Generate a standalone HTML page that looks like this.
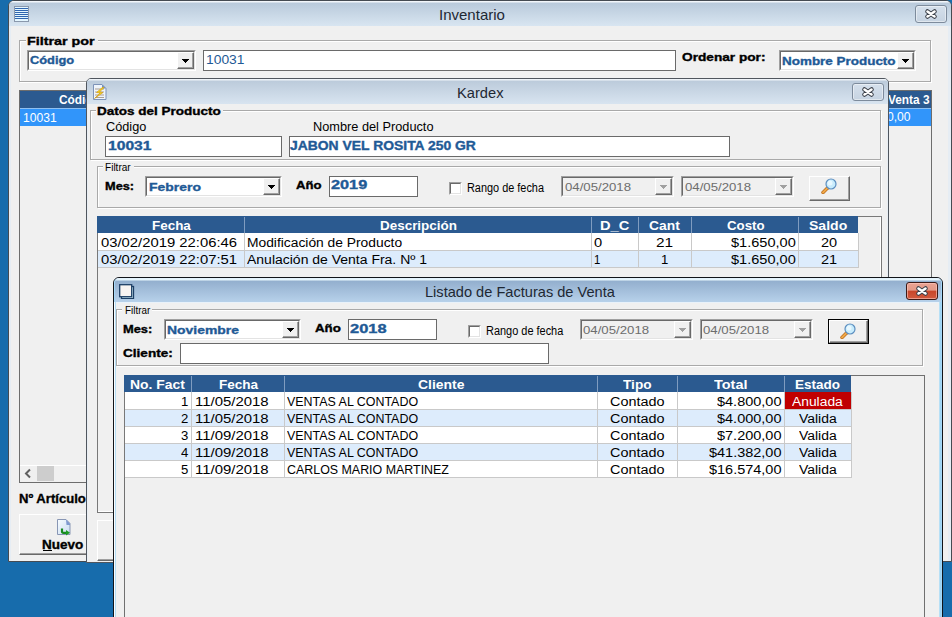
<!DOCTYPE html>
<html><head><meta charset="utf-8"><style>
html,body{margin:0;padding:0;}
body{width:952px;height:617px;overflow:hidden;position:relative;background:#176cac;font-family:"Liberation Sans",sans-serif;}
div{position:absolute;box-sizing:border-box;}
svg{position:absolute;}
.t{white-space:pre;transform-origin:0 0;font-family:"Liberation Sans",sans-serif;}
</style></head><body>
<div style="left:8px;top:0px;width:944px;height:562px;background:#dfe8f1;border:1px solid #454b52;border-radius:6px 6px 0 0;"></div>
<div style="left:9px;top:1px;width:942px;height:25px;background:linear-gradient(#f2f6fa 0px,#f2f6fa 1px,#b9cadb 2px,#d8e5f1 100%);border-radius:5px 5px 0 0;"></div>
<div style="left:9px;top:26px;width:942px;height:535px;background:#e6edf4;"></div>
<div style="left:11px;top:26px;width:937px;height:535px;background:#f0f0f0;"></div>
<div style="left:14px;top:6px;width:15px;height:16px;background:#e4f6ff;border:1px solid #8a98ac;"></div>
<div style="left:15px;top:8px;width:13px;height:1px;background:#2f66b0;"></div>
<div style="left:15px;top:10px;width:13px;height:1px;background:#2f66b0;"></div>
<div style="left:15px;top:12px;width:13px;height:1px;background:#2f66b0;"></div>
<div style="left:15px;top:14px;width:13px;height:1px;background:#2f66b0;"></div>
<div style="left:15px;top:16px;width:13px;height:1px;background:#2f66b0;"></div>
<div style="left:15px;top:18px;width:13px;height:1px;background:#2f66b0;"></div>
<div class="t" style="left:438.50px;top:7px;font-weight:normal;font-size:15px;line-height:15px;color:#1e2833;transform:scaleX(1.0004);">Inventario</div>
<div style="left:915px;top:5px;width:32px;height:18px;border:1px solid #7d8b9c;border-radius:3px;background:linear-gradient(#d5e0ec,#c6d3e1);box-shadow:inset 0 0 0 1px rgba(255,255,255,.45);"></div>
<svg style="position:absolute;left:924.0px;top:8.0px" width="14" height="12" viewBox="0 0 14 12"><path d="M3.5 3.5 L10.5 8.5 M10.5 3.5 L3.5 8.5" stroke="#3a3f48" stroke-width="4.6" stroke-linecap="round"/><path d="M3.5 3.5 L10.5 8.5 M10.5 3.5 L3.5 8.5" stroke="#fff" stroke-width="2.6" stroke-linecap="round"/></svg>
<div style="left:19px;top:40px;width:912px;height:42px;border:1px solid #a9a9a9;box-shadow:inset 1px 1px #fff,1px 1px #fff;"></div>
<div style="left:26px;top:33px;width:72px;height:13px;background:#f0f0f0;"></div>
<div class="t" style="left:27.40px;top:36px;font-weight:bold;font-size:11px;line-height:11px;color:#000;transform:scaleX(1.3004);-webkit-text-stroke:0.35px #000;">Filtrar por</div>
<div style="left:27px;top:50px;width:169px;height:21px;background:#fff;border-top:1px solid #a0a0a0;border-left:1px solid #a0a0a0;border-bottom:1px solid #fff;border-right:1px solid #fff;"></div>
<div style="left:28px;top:51px;width:167px;height:19px;border-top:1px solid #696969;border-left:1px solid #696969;border-bottom:1px solid #e3e3e3;border-right:1px solid #e3e3e3;"></div>
<div style="left:177px;top:52px;width:17px;height:17px;background:#f0f0f0;border-top:1px solid #fff;border-left:1px solid #fff;border-bottom:1px solid #696969;border-right:1px solid #696969;"></div>
<div style="left:178px;top:53px;width:15px;height:15px;border-bottom:1px solid #a0a0a0;border-right:1px solid #a0a0a0;"></div>
<div style="left:182px;top:59px;width:7px;height:1px;background:#000;"></div>
<div style="left:183px;top:60px;width:5px;height:1px;background:#000;"></div>
<div style="left:184px;top:61px;width:3px;height:1px;background:#000;"></div>
<div style="left:185px;top:62px;width:1px;height:1px;background:#000;"></div>
<div class="t" style="left:30.33px;top:55px;font-weight:bold;font-size:11px;line-height:11px;color:#1f5a96;transform:scaleX(1.1665);-webkit-text-stroke:0.35px #1f5a96;">Código</div>
<div style="left:203px;top:50px;width:473px;height:21px;background:#fff;border:1px solid #6a6a6a;"></div>
<div class="t" style="left:205.65px;top:54px;font-weight:normal;font-size:12px;line-height:12px;color:#1f5a96;transform:scaleX(1.1531);">10031</div>
<div class="t" style="left:682.06px;top:52px;font-weight:bold;font-size:11px;line-height:11px;color:#000;transform:scaleX(1.2418);-webkit-text-stroke:0.35px #000;">Ordenar por:</div>
<div style="left:779px;top:50px;width:137px;height:21px;background:#fff;border-top:1px solid #a0a0a0;border-left:1px solid #a0a0a0;border-bottom:1px solid #fff;border-right:1px solid #fff;"></div>
<div style="left:780px;top:51px;width:135px;height:19px;border-top:1px solid #696969;border-left:1px solid #696969;border-bottom:1px solid #e3e3e3;border-right:1px solid #e3e3e3;"></div>
<div style="left:897px;top:52px;width:17px;height:17px;background:#f0f0f0;border-top:1px solid #fff;border-left:1px solid #fff;border-bottom:1px solid #696969;border-right:1px solid #696969;"></div>
<div style="left:898px;top:53px;width:15px;height:15px;border-bottom:1px solid #a0a0a0;border-right:1px solid #a0a0a0;"></div>
<div style="left:902px;top:59px;width:7px;height:1px;background:#000;"></div>
<div style="left:903px;top:60px;width:5px;height:1px;background:#000;"></div>
<div style="left:904px;top:61px;width:3px;height:1px;background:#000;"></div>
<div style="left:905px;top:62px;width:1px;height:1px;background:#000;"></div>
<div class="t" style="left:782.38px;top:56px;font-weight:bold;font-size:11px;line-height:11px;color:#1f5a96;transform:scaleX(1.2224);-webkit-text-stroke:0.35px #1f5a96;">Nombre Producto</div>
<div style="left:19px;top:90px;width:913px;height:393px;background:#f0f0f0;border:1px solid #6d6d6d;"></div>
<div style="left:20px;top:91px;width:911px;height:17px;background:#2b5a90;"></div>
<div style="left:20px;top:108px;width:911px;height:1px;background:#8fc0f0;"></div>
<div style="left:20px;top:109px;width:911px;height:17px;background:#3195fa;"></div>
<div class="t" style="left:59.41px;top:94px;font-weight:bold;font-size:12px;line-height:12px;color:#fff;transform:scaleX(0.9868);-webkit-text-stroke:0.35px #fff;-webkit-text-stroke:0;">Código</div>
<div class="t" style="left:888.01px;top:94px;font-weight:bold;font-size:12px;line-height:12px;color:#fff;transform:scaleX(0.9870);-webkit-text-stroke:0.35px #fff;-webkit-text-stroke:0;">Venta 3</div>
<div class="t" style="left:23.09px;top:112px;font-weight:normal;font-size:12px;line-height:12px;color:#fff;transform:scaleX(1.0101);">10031</div>
<div class="t" style="left:886.99px;top:111px;font-weight:normal;font-size:12px;line-height:12px;color:#fff;transform:scaleX(1.0109);">0,00</div>
<div style="left:20px;top:465px;width:911px;height:17px;background:#f0f0f0;border-top:1px solid #fff;"></div>
<div style="left:37px;top:466px;width:17px;height:15px;background:#cdcdcd;"></div>
<svg style="position:absolute;left:24px;top:468px" width="8" height="11" viewBox="0 0 8 11"><path d="M6 1.5 L2 5.5 L6 9.5" stroke="#606060" stroke-width="2" fill="none"/></svg>
<div class="t" style="left:18.69px;top:492px;font-weight:bold;font-size:13px;line-height:13px;color:#000;transform:scaleX(1.0063);-webkit-text-stroke:0.35px #000;">Nº Artículo</div>
<div style="left:19px;top:514px;width:81px;height:41px;background:#f0f0f0;border-top:1px solid #fff;border-left:1px solid #fff;border-bottom:1px solid #696969;border-right:1px solid #696969;"></div>
<div style="left:20px;top:515px;width:79px;height:39px;border-bottom:1px solid #a0a0a0;border-right:1px solid #a0a0a0;"></div>
<svg style="position:absolute;left:57px;top:519px" width="14" height="17" viewBox="0 0 14 17"><defs><linearGradient id="pg" x1="0" y1="0" x2="1" y2="1"><stop offset="0" stop-color="#f8fcff"/><stop offset="1" stop-color="#c8dcf2"/></linearGradient></defs><path d="M0.5 0.5 H9 L13 4.5 V15.5 H0.5 Z" fill="url(#pg)" stroke="#8896b4"/><path d="M9 0.5 L13 4.5 V6 H9.5 Z" fill="#7e9ad0"/><path d="M5 9.5 V12.5 Q5 13.8 6.5 13.8 H9.5" stroke="#178a1e" stroke-width="2.2" fill="none"/><path d="M9 11 L13 13.8 L9 16.6 Z" fill="#1c9c24"/></svg>
<div class="t" style="left:42.38px;top:539px;font-weight:bold;font-size:12px;line-height:12px;color:#000;transform:scaleX(1.1243);-webkit-text-stroke:0.35px #000;">Nuevo</div>
<div style="left:43px;top:550px;width:9px;height:1px;background:#000;"></div>
<div style="left:86px;top:78px;width:803px;height:485px;background:#dfe8f1;border:1px solid #50565e;border-radius:5px 5px 0 0;"></div>
<div style="left:87px;top:79px;width:801px;height:25px;background:linear-gradient(#eef3f8 0px,#eef3f8 1px,#bccbdb 2px,#d8e4f0 100%);border-radius:4px 4px 0 0;"></div>
<div style="left:87px;top:104px;width:801px;height:458px;background:#e8eef4;"></div>
<div style="left:88px;top:104px;width:799px;height:458px;background:#f0f0f0;"></div>
<svg style="position:absolute;left:93px;top:84px" width="14" height="16" viewBox="0 0 14 16"><path d="M0.5 0.5 H9 L13 4.5 V15.5 H0.5 Z" fill="#eef4fb" stroke="#7d93b8"/><path d="M9 0.5 V4.5 H13 Z" fill="#6d8fc6"/><g stroke="#9c8a78" stroke-width="1" opacity=".8"><line x1="2" y1="5" x2="11" y2="5"/><line x1="2" y1="8" x2="11" y2="8"/><line x1="2" y1="11" x2="11" y2="11"/><line x1="2" y1="13.5" x2="11" y2="13.5"/></g><path d="M10 3 L3.5 8.5 L7 9 L1.5 14.5 L10 8.5 L6.5 8 L11 3.5 Z" fill="#f6dc1c" stroke="#d29a18" stroke-width=".7"/></svg>
<div class="t" style="left:456.62px;top:85px;font-weight:normal;font-size:15px;line-height:15px;color:#1e2833;transform:scaleX(0.9777);">Kardex</div>
<div style="left:852px;top:83px;width:32px;height:18px;border:1px solid #7d8b9c;border-radius:3px;background:linear-gradient(#d5e0ec,#c6d3e1);box-shadow:inset 0 0 0 1px rgba(255,255,255,.45);"></div>
<svg style="position:absolute;left:861.0px;top:86.0px" width="14" height="12" viewBox="0 0 14 12"><path d="M3.5 3.5 L10.5 8.5 M10.5 3.5 L3.5 8.5" stroke="#3a3f48" stroke-width="4.6" stroke-linecap="round"/><path d="M3.5 3.5 L10.5 8.5 M10.5 3.5 L3.5 8.5" stroke="#fff" stroke-width="2.6" stroke-linecap="round"/></svg>
<div style="left:90px;top:110px;width:791px;height:50px;border:1px solid #a9a9a9;box-shadow:inset 1px 1px #fff,1px 1px #fff;"></div>
<div style="left:96px;top:105px;width:127px;height:11px;background:#f0f0f0;"></div>
<div class="t" style="left:97.17px;top:106px;font-weight:bold;font-size:11px;line-height:11px;color:#000;transform:scaleX(1.2274);-webkit-text-stroke:0.35px #000;">Datos del Producto</div>
<div class="t" style="left:105.54px;top:121px;font-weight:normal;font-size:12px;line-height:12px;color:#000;transform:scaleX(1.0589);">Código</div>
<div class="t" style="left:313.14px;top:121px;font-weight:normal;font-size:12px;line-height:12px;color:#000;transform:scaleX(1.0625);">Nombre del Producto</div>
<div style="left:105px;top:136px;width:177px;height:21px;background:#fff;border:1px solid #6a6a6a;"></div>
<div class="t" style="left:107.50px;top:140px;font-weight:bold;font-size:12px;line-height:12px;color:#1f5a96;transform:scaleX(1.3023);-webkit-text-stroke:0.35px #1f5a96;">10031</div>
<div style="left:289px;top:136px;width:441px;height:21px;background:#fff;border:1px solid #6a6a6a;"></div>
<div class="t" style="left:290.34px;top:140px;font-weight:bold;font-size:12px;line-height:12px;color:#1f5a96;transform:scaleX(1.1583);-webkit-text-stroke:0.35px #1f5a96;">JABON VEL ROSITA 250 GR</div>
<div style="left:97px;top:166px;width:784px;height:42px;border:1px solid #a9a9a9;box-shadow:inset 1px 1px #fff,1px 1px #fff;"></div>
<div style="left:103px;top:161px;width:31px;height:11px;background:#f0f0f0;"></div>
<div class="t" style="left:105.49px;top:162px;font-weight:normal;font-size:11px;line-height:11px;color:#000;transform:scaleX(0.9142);">Filtrar</div>
<div class="t" style="left:104.64px;top:181px;font-weight:bold;font-size:11px;line-height:11px;color:#000;transform:scaleX(1.1608);-webkit-text-stroke:0.35px #000;">Mes:</div>
<div style="left:145px;top:176px;width:137px;height:21px;background:#fff;border-top:1px solid #a0a0a0;border-left:1px solid #a0a0a0;border-bottom:1px solid #fff;border-right:1px solid #fff;"></div>
<div style="left:146px;top:177px;width:135px;height:19px;border-top:1px solid #696969;border-left:1px solid #696969;border-bottom:1px solid #e3e3e3;border-right:1px solid #e3e3e3;"></div>
<div style="left:263px;top:178px;width:17px;height:17px;background:#f0f0f0;border-top:1px solid #fff;border-left:1px solid #fff;border-bottom:1px solid #696969;border-right:1px solid #696969;"></div>
<div style="left:264px;top:179px;width:15px;height:15px;border-bottom:1px solid #a0a0a0;border-right:1px solid #a0a0a0;"></div>
<div style="left:268px;top:185px;width:7px;height:1px;background:#000;"></div>
<div style="left:269px;top:186px;width:5px;height:1px;background:#000;"></div>
<div style="left:270px;top:187px;width:3px;height:1px;background:#000;"></div>
<div style="left:271px;top:188px;width:1px;height:1px;background:#000;"></div>
<div class="t" style="left:148.63px;top:182px;font-weight:bold;font-size:11px;line-height:11px;color:#1f5a96;transform:scaleX(1.2673);-webkit-text-stroke:0.35px #1f5a96;">Febrero</div>
<div class="t" style="left:295.91px;top:180px;font-weight:bold;font-size:11px;line-height:11px;color:#000;transform:scaleX(1.1936);-webkit-text-stroke:0.35px #000;">Año</div>
<div style="left:329px;top:176px;width:89px;height:21px;background:#fff;border:1px solid #6a6a6a;"></div>
<div class="t" style="left:330.64px;top:179px;font-weight:bold;font-size:12px;line-height:12px;color:#1f5a96;transform:scaleX(1.3567);-webkit-text-stroke:0.35px #1f5a96;">2019</div>
<div style="left:449px;top:182px;width:13px;height:13px;background:#fff;border-top:1px solid #a0a0a0;border-left:1px solid #a0a0a0;border-bottom:1px solid #fff;border-right:1px solid #fff;"></div>
<div style="left:450px;top:183px;width:11px;height:11px;border-top:1px solid #696969;border-left:1px solid #696969;border-bottom:1px solid #e3e3e3;border-right:1px solid #e3e3e3;"></div>
<div class="t" style="left:466.99px;top:182px;font-weight:normal;font-size:12px;line-height:12px;color:#000;transform:scaleX(0.9086);">Rango de fecha</div>
<div style="left:561px;top:176px;width:113px;height:21px;background:#f0f0f0;border-top:1px solid #a0a0a0;border-left:1px solid #a0a0a0;border-bottom:1px solid #fff;border-right:1px solid #fff;"></div>
<div style="left:562px;top:177px;width:111px;height:19px;border-top:1px solid #696969;border-left:1px solid #696969;border-bottom:1px solid #e3e3e3;border-right:1px solid #e3e3e3;"></div>
<div style="left:655px;top:178px;width:17px;height:17px;background:#f0f0f0;border-top:1px solid #fff;border-left:1px solid #fff;border-bottom:1px solid #696969;border-right:1px solid #696969;"></div>
<div style="left:656px;top:179px;width:15px;height:15px;border-bottom:1px solid #a0a0a0;border-right:1px solid #a0a0a0;"></div>
<div style="left:660px;top:185px;width:7px;height:1px;background:#a0a0a0;"></div>
<div style="left:661px;top:186px;width:5px;height:1px;background:#a0a0a0;"></div>
<div style="left:662px;top:187px;width:3px;height:1px;background:#a0a0a0;"></div>
<div style="left:663px;top:188px;width:1px;height:1px;background:#a0a0a0;"></div>
<div class="t" style="left:564.80px;top:182px;font-weight:normal;font-size:11px;line-height:11px;color:#6d6d6d;transform:scaleX(1.1994);">04/05/2018</div>
<div style="left:681px;top:176px;width:113px;height:21px;background:#f0f0f0;border-top:1px solid #a0a0a0;border-left:1px solid #a0a0a0;border-bottom:1px solid #fff;border-right:1px solid #fff;"></div>
<div style="left:682px;top:177px;width:111px;height:19px;border-top:1px solid #696969;border-left:1px solid #696969;border-bottom:1px solid #e3e3e3;border-right:1px solid #e3e3e3;"></div>
<div style="left:775px;top:178px;width:17px;height:17px;background:#f0f0f0;border-top:1px solid #fff;border-left:1px solid #fff;border-bottom:1px solid #696969;border-right:1px solid #696969;"></div>
<div style="left:776px;top:179px;width:15px;height:15px;border-bottom:1px solid #a0a0a0;border-right:1px solid #a0a0a0;"></div>
<div style="left:780px;top:185px;width:7px;height:1px;background:#a0a0a0;"></div>
<div style="left:781px;top:186px;width:5px;height:1px;background:#a0a0a0;"></div>
<div style="left:782px;top:187px;width:3px;height:1px;background:#a0a0a0;"></div>
<div style="left:783px;top:188px;width:1px;height:1px;background:#a0a0a0;"></div>
<div class="t" style="left:684.60px;top:182px;font-weight:normal;font-size:11px;line-height:11px;color:#6d6d6d;transform:scaleX(1.1994);">04/05/2018</div>
<div style="left:809px;top:176px;width:41px;height:25px;background:#f0f0f0;border-top:1px solid #fff;border-left:1px solid #fff;border-bottom:1px solid #696969;border-right:1px solid #696969;"></div>
<div style="left:810px;top:177px;width:39px;height:23px;border-bottom:1px solid #a0a0a0;border-right:1px solid #a0a0a0;"></div>
<svg style="position:absolute;left:821px;top:178px" width="16" height="16" viewBox="0 0 16 16"><path d="M2 14.5 L6.5 10" stroke="#b86a1a" stroke-width="3.4" stroke-linecap="round"/><path d="M2 14.5 L6.5 10" stroke="#f0a848" stroke-width="2" stroke-linecap="round"/><circle cx="10" cy="6" r="5" fill="#c8ecfc" stroke="#5d8fc0" stroke-width="1.2"/><circle cx="9" cy="5" r="2.5" fill="#e8f8ff"/></svg>
<div style="left:97px;top:216px;width:785px;height:297px;border:1px solid #787878;box-shadow:inset -1px -1px #fff;"></div>
<div style="left:97px;top:216px;width:761px;height:17px;background:#2b5a90;"></div>
<div style="left:244px;top:217px;width:1px;height:16px;background:#7f9cc0;"></div>
<div style="left:591px;top:217px;width:1px;height:16px;background:#7f9cc0;"></div>
<div style="left:638px;top:217px;width:1px;height:16px;background:#7f9cc0;"></div>
<div style="left:691px;top:217px;width:1px;height:16px;background:#7f9cc0;"></div>
<div style="left:798px;top:217px;width:1px;height:16px;background:#7f9cc0;"></div>
<div style="left:97px;top:233px;width:761px;height:18px;background:#fff;"></div>
<div style="left:97px;top:250px;width:761px;height:1px;background:#c9c9c9;"></div>
<div style="left:97px;top:251px;width:761px;height:17px;background:#ddecfc;"></div>
<div style="left:97px;top:267px;width:761px;height:1px;background:#c9c9c9;"></div>
<div style="left:97px;top:233px;width:1px;height:35px;background:#787878;"></div>
<div style="left:244px;top:233px;width:1px;height:35px;background:#c9c9c9;"></div>
<div style="left:591px;top:233px;width:1px;height:35px;background:#c9c9c9;"></div>
<div style="left:638px;top:233px;width:1px;height:35px;background:#c9c9c9;"></div>
<div style="left:691px;top:233px;width:1px;height:35px;background:#c9c9c9;"></div>
<div style="left:798px;top:233px;width:1px;height:35px;background:#c9c9c9;"></div>
<div style="left:858px;top:233px;width:1px;height:35px;background:#c9c9c9;"></div>
<div class="t" style="left:151.58px;top:220px;font-weight:bold;font-size:12px;line-height:12px;color:#fff;transform:scaleX(1.1198);-webkit-text-stroke:0.35px #fff;-webkit-text-stroke:0;">Fecha</div>
<div class="t" style="left:379.78px;top:220px;font-weight:bold;font-size:12px;line-height:12px;color:#fff;transform:scaleX(1.1199);-webkit-text-stroke:0.35px #fff;-webkit-text-stroke:0;">Descripción</div>
<div class="t" style="left:599.98px;top:220px;font-weight:bold;font-size:12px;line-height:12px;color:#fff;transform:scaleX(1.2228);-webkit-text-stroke:0.35px #fff;-webkit-text-stroke:0;">D_C</div>
<div class="t" style="left:649.15px;top:220px;font-weight:bold;font-size:12px;line-height:12px;color:#fff;transform:scaleX(1.1542);-webkit-text-stroke:0.35px #fff;-webkit-text-stroke:0;">Cant</div>
<div class="t" style="left:726.50px;top:220px;font-weight:bold;font-size:12px;line-height:12px;color:#fff;transform:scaleX(1.1037);-webkit-text-stroke:0.35px #fff;-webkit-text-stroke:0;">Costo</div>
<div class="t" style="left:808.83px;top:220px;font-weight:bold;font-size:12px;line-height:12px;color:#fff;transform:scaleX(1.1693);-webkit-text-stroke:0.35px #fff;-webkit-text-stroke:0;">Saldo</div>
<div class="t" style="left:100.57px;top:237px;font-weight:normal;font-size:12px;line-height:12px;color:#000;transform:scaleX(1.2350);">03/02/2019 22:06:46</div>
<div class="t" style="left:246.95px;top:237px;font-weight:normal;font-size:12px;line-height:12px;color:#000;transform:scaleX(1.1509);">Modificación de Producto</div>
<div class="t" style="left:594.08px;top:237px;font-weight:normal;font-size:12px;line-height:12px;color:#000;transform:scaleX(1.2210);">0</div>
<div class="t" style="left:655.72px;top:237px;font-weight:normal;font-size:12px;line-height:12px;color:#000;transform:scaleX(1.2830);">21</div>
<div class="t" style="left:730.79px;top:237px;font-weight:normal;font-size:12px;line-height:12px;color:#000;transform:scaleX(1.2129);">$1.650,00</div>
<div class="t" style="left:820.59px;top:237px;font-weight:normal;font-size:12px;line-height:12px;color:#000;transform:scaleX(1.2089);">20</div>
<div class="t" style="left:100.57px;top:254px;font-weight:normal;font-size:12px;line-height:12px;color:#000;transform:scaleX(1.2350);">03/02/2019 22:07:51</div>
<div class="t" style="left:246.93px;top:254px;font-weight:normal;font-size:12px;line-height:12px;color:#000;transform:scaleX(1.1652);">Anulación de Venta Fra. Nº 1</div>
<div class="t" style="left:594.35px;top:254px;font-weight:normal;font-size:12px;line-height:12px;color:#000;transform:scaleX(0.9476);">1</div>
<div class="t" style="left:660.91px;top:254px;font-weight:normal;font-size:12px;line-height:12px;color:#000;transform:scaleX(1.0934);">1</div>
<div class="t" style="left:730.79px;top:254px;font-weight:normal;font-size:12px;line-height:12px;color:#000;transform:scaleX(1.2129);">$1.650,00</div>
<div class="t" style="left:820.59px;top:254px;font-weight:normal;font-size:12px;line-height:12px;color:#000;transform:scaleX(1.2089);">21</div>
<div style="left:97px;top:520px;width:93px;height:41px;background:#f0f0f0;border-top:1px solid #fff;border-left:1px solid #fff;border-bottom:1px solid #696969;border-right:1px solid #696969;"></div>
<div style="left:98px;top:521px;width:91px;height:39px;border-bottom:1px solid #a0a0a0;border-right:1px solid #a0a0a0;"></div>
<div style="left:113px;top:277px;width:830px;height:363px;background:#bcd4ec;border:1px solid #111418;border-radius:6px 6px 0 0;"></div>
<div style="left:114px;top:278px;width:828px;height:362px;border:1px solid #a6d8f8;border-top-color:#e4f2fc;border-radius:5px 5px 0 0;"></div>
<div style="left:115px;top:279px;width:826px;height:23px;background:linear-gradient(#e6f6fc 0px,#e6f6fc 1px,#93afce 2px,#b7d1ea 100%);border-radius:4px 4px 0 0;"></div>
<div style="left:115px;top:302px;width:826px;height:338px;background:#e9f2fa;"></div>
<div style="left:116px;top:303px;width:823px;height:337px;background:#f0f0f0;"></div>
<div style="left:939px;top:302px;width:2px;height:338px;background:linear-gradient(90deg,#c4e6f8,#8fcdf0);"></div>
<div style="left:114px;top:302px;width:1px;height:338px;background:#fbfdff;"></div>
<div style="left:115px;top:302px;width:1px;height:338px;background:#b4ddf4;"></div>
<svg style="position:absolute;left:119px;top:284px" width="16" height="15" viewBox="0 0 16 15"><rect x="2.5" y="2.5" width="12" height="12" fill="#dcfaff" stroke="#1e3f66" stroke-width="1.3"/><rect x="0.7" y="0.7" width="12" height="12" fill="#f8f4f2" stroke="#1e3f66" stroke-width="1.3"/></svg>
<div class="t" style="left:424.73px;top:284px;font-weight:normal;font-size:15px;line-height:15px;color:#1e2833;transform:scaleX(0.9730);">Listado de Facturas de Venta</div>
<div style="left:906px;top:282px;width:32px;height:18px;border:1px solid #3c1a16;border-radius:3px;background:linear-gradient(#eba393 0%,#e39a88 45%,#c8462a 50%,#d15a3e 100%);box-shadow:inset 0 0 0 1px rgba(255,200,190,.6);"></div>
<svg style="position:absolute;left:915.0px;top:285.0px" width="14" height="12" viewBox="0 0 14 12"><path d="M3.5 3.5 L10.5 8.5 M10.5 3.5 L3.5 8.5" stroke="#3a3f48" stroke-width="4.6" stroke-linecap="round"/><path d="M3.5 3.5 L10.5 8.5 M10.5 3.5 L3.5 8.5" stroke="#fff" stroke-width="2.6" stroke-linecap="round"/></svg>
<div style="left:116px;top:309px;width:807px;height:57px;border:1px solid #a9a9a9;box-shadow:inset 1px 1px #fff,1px 1px #fff;"></div>
<div style="left:122px;top:304px;width:30px;height:11px;background:#f0f0f0;"></div>
<div class="t" style="left:124.60px;top:305px;font-weight:normal;font-size:11px;line-height:11px;color:#000;transform:scaleX(0.8993);">Filtrar</div>
<div class="t" style="left:123.33px;top:324px;font-weight:bold;font-size:11px;line-height:11px;color:#000;transform:scaleX(1.1692);-webkit-text-stroke:0.35px #000;">Mes:</div>
<div style="left:164px;top:319px;width:137px;height:21px;background:#fff;border-top:1px solid #a0a0a0;border-left:1px solid #a0a0a0;border-bottom:1px solid #fff;border-right:1px solid #fff;"></div>
<div style="left:165px;top:320px;width:135px;height:19px;border-top:1px solid #696969;border-left:1px solid #696969;border-bottom:1px solid #e3e3e3;border-right:1px solid #e3e3e3;"></div>
<div style="left:282px;top:321px;width:17px;height:17px;background:#f0f0f0;border-top:1px solid #fff;border-left:1px solid #fff;border-bottom:1px solid #696969;border-right:1px solid #696969;"></div>
<div style="left:283px;top:322px;width:15px;height:15px;border-bottom:1px solid #a0a0a0;border-right:1px solid #a0a0a0;"></div>
<div style="left:287px;top:328px;width:7px;height:1px;background:#000;"></div>
<div style="left:288px;top:329px;width:5px;height:1px;background:#000;"></div>
<div style="left:289px;top:330px;width:3px;height:1px;background:#000;"></div>
<div style="left:290px;top:331px;width:1px;height:1px;background:#000;"></div>
<div class="t" style="left:167.34px;top:325px;font-weight:bold;font-size:11px;line-height:11px;color:#1f5a96;transform:scaleX(1.2648);-webkit-text-stroke:0.35px #1f5a96;">Noviembre</div>
<div class="t" style="left:314.99px;top:323px;font-weight:bold;font-size:11px;line-height:11px;color:#000;transform:scaleX(1.2085);-webkit-text-stroke:0.35px #000;">Año</div>
<div style="left:348px;top:319px;width:89px;height:21px;background:#fff;border:1px solid #6a6a6a;"></div>
<div class="t" style="left:349.73px;top:323px;font-weight:bold;font-size:12px;line-height:12px;color:#1f5a96;transform:scaleX(1.3685);-webkit-text-stroke:0.35px #1f5a96;">2018</div>
<div style="left:468px;top:325px;width:13px;height:13px;background:#fff;border-top:1px solid #a0a0a0;border-left:1px solid #a0a0a0;border-bottom:1px solid #fff;border-right:1px solid #fff;"></div>
<div style="left:469px;top:326px;width:11px;height:11px;border-top:1px solid #696969;border-left:1px solid #696969;border-bottom:1px solid #e3e3e3;border-right:1px solid #e3e3e3;"></div>
<div class="t" style="left:485.89px;top:325px;font-weight:normal;font-size:12px;line-height:12px;color:#000;transform:scaleX(0.9122);">Rango de fecha</div>
<div style="left:580px;top:319px;width:113px;height:21px;background:#f0f0f0;border-top:1px solid #a0a0a0;border-left:1px solid #a0a0a0;border-bottom:1px solid #fff;border-right:1px solid #fff;"></div>
<div style="left:581px;top:320px;width:111px;height:19px;border-top:1px solid #696969;border-left:1px solid #696969;border-bottom:1px solid #e3e3e3;border-right:1px solid #e3e3e3;"></div>
<div style="left:674px;top:321px;width:17px;height:17px;background:#f0f0f0;border-top:1px solid #fff;border-left:1px solid #fff;border-bottom:1px solid #696969;border-right:1px solid #696969;"></div>
<div style="left:675px;top:322px;width:15px;height:15px;border-bottom:1px solid #a0a0a0;border-right:1px solid #a0a0a0;"></div>
<div style="left:679px;top:328px;width:7px;height:1px;background:#a0a0a0;"></div>
<div style="left:680px;top:329px;width:5px;height:1px;background:#a0a0a0;"></div>
<div style="left:681px;top:330px;width:3px;height:1px;background:#a0a0a0;"></div>
<div style="left:682px;top:331px;width:1px;height:1px;background:#a0a0a0;"></div>
<div class="t" style="left:583.20px;top:325px;font-weight:normal;font-size:11px;line-height:11px;color:#6d6d6d;transform:scaleX(1.2012);">04/05/2018</div>
<div style="left:700px;top:319px;width:113px;height:21px;background:#f0f0f0;border-top:1px solid #a0a0a0;border-left:1px solid #a0a0a0;border-bottom:1px solid #fff;border-right:1px solid #fff;"></div>
<div style="left:701px;top:320px;width:111px;height:19px;border-top:1px solid #696969;border-left:1px solid #696969;border-bottom:1px solid #e3e3e3;border-right:1px solid #e3e3e3;"></div>
<div style="left:794px;top:321px;width:17px;height:17px;background:#f0f0f0;border-top:1px solid #fff;border-left:1px solid #fff;border-bottom:1px solid #696969;border-right:1px solid #696969;"></div>
<div style="left:795px;top:322px;width:15px;height:15px;border-bottom:1px solid #a0a0a0;border-right:1px solid #a0a0a0;"></div>
<div style="left:799px;top:328px;width:7px;height:1px;background:#a0a0a0;"></div>
<div style="left:800px;top:329px;width:5px;height:1px;background:#a0a0a0;"></div>
<div style="left:801px;top:330px;width:3px;height:1px;background:#a0a0a0;"></div>
<div style="left:802px;top:331px;width:1px;height:1px;background:#a0a0a0;"></div>
<div class="t" style="left:703.40px;top:325px;font-weight:normal;font-size:11px;line-height:11px;color:#6d6d6d;transform:scaleX(1.2012);">04/05/2018</div>
<div class="t" style="left:123.27px;top:348px;font-weight:bold;font-size:11px;line-height:11px;color:#000;transform:scaleX(1.2339);-webkit-text-stroke:0.35px #000;">Cliente:</div>
<div style="left:180px;top:343px;width:369px;height:21px;background:#fff;border:1px solid #6a6a6a;"></div>
<div style="left:828px;top:319px;width:41px;height:25px;border:1px solid #000;"></div>
<div style="left:829px;top:320px;width:39px;height:23px;background:#f0f0f0;border-top:1px solid #fff;border-left:1px solid #fff;border-bottom:1px solid #696969;border-right:1px solid #696969;"></div>
<div style="left:830px;top:321px;width:37px;height:21px;border-bottom:1px solid #a0a0a0;border-right:1px solid #a0a0a0;"></div>
<svg style="position:absolute;left:840px;top:323px" width="16" height="16" viewBox="0 0 16 16"><path d="M2 14.5 L6.5 10" stroke="#b86a1a" stroke-width="3.4" stroke-linecap="round"/><path d="M2 14.5 L6.5 10" stroke="#f0a848" stroke-width="2" stroke-linecap="round"/><circle cx="10" cy="6" r="5" fill="#c8ecfc" stroke="#5d8fc0" stroke-width="1.2"/><circle cx="9" cy="5" r="2.5" fill="#e8f8ff"/></svg>
<div style="left:124px;top:375px;width:801px;height:265px;border:1px solid #707070;"></div>
<div style="left:124px;top:375px;width:727px;height:17px;background:#2b5a90;"></div>
<div style="left:191px;top:376px;width:1px;height:16px;background:#7f9cc0;"></div>
<div style="left:284px;top:376px;width:1px;height:16px;background:#7f9cc0;"></div>
<div style="left:597px;top:376px;width:1px;height:16px;background:#7f9cc0;"></div>
<div style="left:677px;top:376px;width:1px;height:16px;background:#7f9cc0;"></div>
<div style="left:784px;top:376px;width:1px;height:16px;background:#7f9cc0;"></div>
<div style="left:124px;top:392px;width:727px;height:18px;background:#fff;"></div>
<div style="left:124px;top:409px;width:727px;height:1px;background:#c9c9c9;"></div>
<div style="left:124px;top:410px;width:727px;height:17px;background:#ddecfc;"></div>
<div style="left:124px;top:426px;width:727px;height:1px;background:#c9c9c9;"></div>
<div style="left:124px;top:427px;width:727px;height:17px;background:#fff;"></div>
<div style="left:124px;top:443px;width:727px;height:1px;background:#c9c9c9;"></div>
<div style="left:124px;top:444px;width:727px;height:17px;background:#ddecfc;"></div>
<div style="left:124px;top:460px;width:727px;height:1px;background:#c9c9c9;"></div>
<div style="left:124px;top:461px;width:727px;height:17px;background:#fff;"></div>
<div style="left:124px;top:477px;width:727px;height:1px;background:#c9c9c9;"></div>
<div style="left:124px;top:392px;width:1px;height:86px;background:#787878;"></div>
<div style="left:191px;top:392px;width:1px;height:86px;background:#c9c9c9;"></div>
<div style="left:284px;top:392px;width:1px;height:86px;background:#c9c9c9;"></div>
<div style="left:597px;top:392px;width:1px;height:86px;background:#c9c9c9;"></div>
<div style="left:677px;top:392px;width:1px;height:86px;background:#c9c9c9;"></div>
<div style="left:784px;top:392px;width:1px;height:86px;background:#c9c9c9;"></div>
<div style="left:851px;top:392px;width:1px;height:86px;background:#c9c9c9;"></div>
<div style="left:785px;top:392px;width:66px;height:17px;background:#c00000;"></div>
<div class="t" style="left:130.44px;top:379px;font-weight:bold;font-size:12px;line-height:12px;color:#fff;transform:scaleX(1.1594);-webkit-text-stroke:0.35px #fff;-webkit-text-stroke:0;">No. Fact</div>
<div class="t" style="left:218.67px;top:379px;font-weight:bold;font-size:12px;line-height:12px;color:#fff;transform:scaleX(1.1288);-webkit-text-stroke:0.35px #fff;-webkit-text-stroke:0;">Fecha</div>
<div class="t" style="left:417.54px;top:379px;font-weight:bold;font-size:12px;line-height:12px;color:#fff;transform:scaleX(1.1619);-webkit-text-stroke:0.35px #fff;-webkit-text-stroke:0;">Cliente</div>
<div class="t" style="left:623.46px;top:379px;font-weight:bold;font-size:12px;line-height:12px;color:#fff;transform:scaleX(1.1376);-webkit-text-stroke:0.35px #fff;-webkit-text-stroke:0;">Tipo</div>
<div class="t" style="left:714.20px;top:379px;font-weight:bold;font-size:12px;line-height:12px;color:#fff;transform:scaleX(1.2039);-webkit-text-stroke:0.35px #fff;-webkit-text-stroke:0;">Total</div>
<div class="t" style="left:795.38px;top:379px;font-weight:bold;font-size:12px;line-height:12px;color:#fff;transform:scaleX(1.1233);-webkit-text-stroke:0.35px #fff;-webkit-text-stroke:0;">Estado</div>
<div class="t" style="left:181.21px;top:396px;font-weight:normal;font-size:12px;line-height:12px;color:#000;transform:scaleX(1.0934);">1</div>
<div class="t" style="left:194.76px;top:396px;font-weight:normal;font-size:12px;line-height:12px;color:#000;transform:scaleX(1.2437);">11/05/2018</div>
<div class="t" style="left:287.36px;top:396px;font-weight:normal;font-size:12px;line-height:12px;color:#000;transform:scaleX(1.0362);">VENTAS AL CONTADO</div>
<div class="t" style="left:610.10px;top:396px;font-weight:normal;font-size:12px;line-height:12px;color:#000;transform:scaleX(1.1998);">Contado</div>
<div class="t" style="left:717.19px;top:396px;font-weight:normal;font-size:12px;line-height:12px;color:#000;transform:scaleX(1.2071);">$4.800,00</div>
<div class="t" style="left:792.45px;top:396px;font-weight:normal;font-size:12px;line-height:12px;color:#fff;transform:scaleX(1.1529);">Anulada</div>
<div class="t" style="left:181.21px;top:413px;font-weight:normal;font-size:12px;line-height:12px;color:#000;transform:scaleX(1.0934);">2</div>
<div class="t" style="left:194.76px;top:413px;font-weight:normal;font-size:12px;line-height:12px;color:#000;transform:scaleX(1.2437);">11/05/2018</div>
<div class="t" style="left:287.36px;top:413px;font-weight:normal;font-size:12px;line-height:12px;color:#000;transform:scaleX(1.0362);">VENTAS AL CONTADO</div>
<div class="t" style="left:610.10px;top:413px;font-weight:normal;font-size:12px;line-height:12px;color:#000;transform:scaleX(1.1998);">Contado</div>
<div class="t" style="left:717.19px;top:413px;font-weight:normal;font-size:12px;line-height:12px;color:#000;transform:scaleX(1.2071);">$4.000,00</div>
<div class="t" style="left:798.74px;top:413px;font-weight:normal;font-size:12px;line-height:12px;color:#000;transform:scaleX(1.1609);">Valida</div>
<div class="t" style="left:181.21px;top:430px;font-weight:normal;font-size:12px;line-height:12px;color:#000;transform:scaleX(1.0934);">3</div>
<div class="t" style="left:194.76px;top:430px;font-weight:normal;font-size:12px;line-height:12px;color:#000;transform:scaleX(1.2437);">11/09/2018</div>
<div class="t" style="left:287.36px;top:430px;font-weight:normal;font-size:12px;line-height:12px;color:#000;transform:scaleX(1.0362);">VENTAS AL CONTADO</div>
<div class="t" style="left:610.10px;top:430px;font-weight:normal;font-size:12px;line-height:12px;color:#000;transform:scaleX(1.1998);">Contado</div>
<div class="t" style="left:717.19px;top:430px;font-weight:normal;font-size:12px;line-height:12px;color:#000;transform:scaleX(1.2071);">$7.200,00</div>
<div class="t" style="left:798.74px;top:430px;font-weight:normal;font-size:12px;line-height:12px;color:#000;transform:scaleX(1.1609);">Valida</div>
<div class="t" style="left:181.21px;top:447px;font-weight:normal;font-size:12px;line-height:12px;color:#000;transform:scaleX(1.0934);">4</div>
<div class="t" style="left:194.76px;top:447px;font-weight:normal;font-size:12px;line-height:12px;color:#000;transform:scaleX(1.2437);">11/09/2018</div>
<div class="t" style="left:287.36px;top:447px;font-weight:normal;font-size:12px;line-height:12px;color:#000;transform:scaleX(1.0362);">VENTAS AL CONTADO</div>
<div class="t" style="left:610.10px;top:447px;font-weight:normal;font-size:12px;line-height:12px;color:#000;transform:scaleX(1.1998);">Contado</div>
<div class="t" style="left:709.19px;top:447px;font-weight:normal;font-size:12px;line-height:12px;color:#000;transform:scaleX(1.2062);">$41.382,00</div>
<div class="t" style="left:798.74px;top:447px;font-weight:normal;font-size:12px;line-height:12px;color:#000;transform:scaleX(1.1609);">Valida</div>
<div class="t" style="left:181.21px;top:464px;font-weight:normal;font-size:12px;line-height:12px;color:#000;transform:scaleX(1.0934);">5</div>
<div class="t" style="left:194.76px;top:464px;font-weight:normal;font-size:12px;line-height:12px;color:#000;transform:scaleX(1.2437);">11/09/2018</div>
<div class="t" style="left:287.37px;top:464px;font-weight:normal;font-size:12px;line-height:12px;color:#000;transform:scaleX(1.0350);">CARLOS MARIO MARTINEZ</div>
<div class="t" style="left:610.10px;top:464px;font-weight:normal;font-size:12px;line-height:12px;color:#000;transform:scaleX(1.1998);">Contado</div>
<div class="t" style="left:709.19px;top:464px;font-weight:normal;font-size:12px;line-height:12px;color:#000;transform:scaleX(1.2062);">$16.574,00</div>
<div class="t" style="left:798.74px;top:464px;font-weight:normal;font-size:12px;line-height:12px;color:#000;transform:scaleX(1.1609);">Valida</div>
</body></html>
